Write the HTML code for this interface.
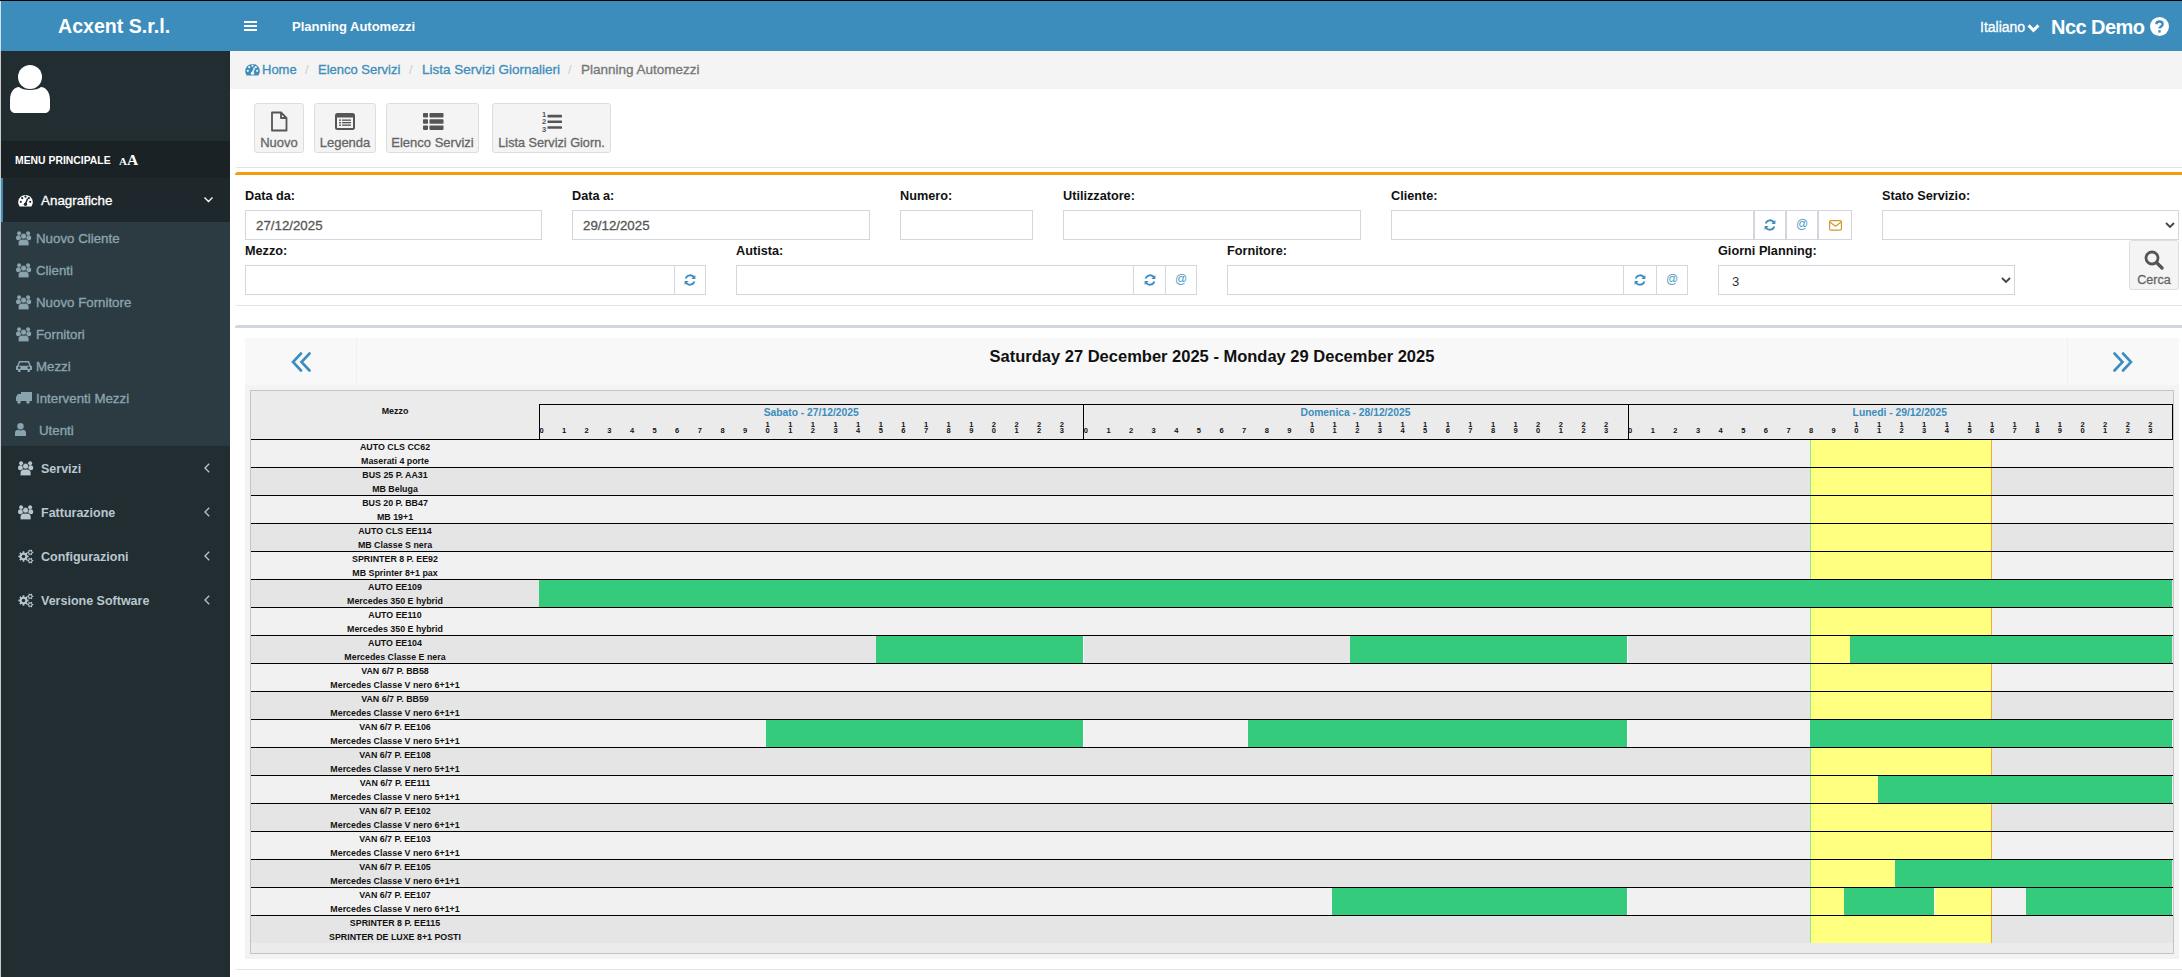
<!DOCTYPE html><html><head><meta charset="utf-8"><title>Planning Automezzi</title><style>
*{box-sizing:border-box;margin:0;padding:0}
html,body{width:2182px;height:977px;overflow:hidden;background:#fff;font-family:"Liberation Sans",sans-serif;}
.a{position:absolute}
.t{position:absolute;white-space:nowrap;line-height:1}
.w{-webkit-text-stroke-width:0.3px}
</style></head><body>
<div class="a" style="left:0;top:0;width:2182px;height:1px;background:#000"></div>
<div class="a" style="left:0;top:1px;width:2182px;height:50px;background:#3c8dbc"></div>
<div class="a" style="left:0;top:1px;width:1px;height:50px;background:#cde0ec"></div>
<div class="t" style="left:58px;top:17px;font-size:19.6px;font-weight:bold;color:#fff">Acxent S.r.l.</div>
<div class="a" style="left:244px;top:21px;width:13px;height:2px;background:#fff;box-shadow:0 4px 0 #fff,0 8px 0 #fff"></div>
<div class="t" style="left:292px;top:20px;font-size:13px;font-weight:bold;color:#fff">Planning Automezzi</div>
<div class="t w" style="left:1980px;top:20px;font-size:14px;color:#fff">Italiano</div>
<svg class="a" style="left:2026px;top:22px" width="15" height="12" viewBox="0 0 15 12"><path d="M2.6 3.4 L7.5 8.3 L12.4 3.4" stroke="#fff" stroke-width="3" fill="none"/></svg>
<div class="t" style="left:2051px;top:16.9px;font-size:20px;letter-spacing:-0.55px;font-weight:bold;color:#fff">Ncc Demo</div>
<svg class="a" style="left:2150px;top:17px" width="19" height="19" viewBox="0 0 19 19"><circle cx="9.5" cy="9.5" r="9.5" fill="#fff"/><path d="M6.3 7.2 C6.3 3.6 12.7 3.6 12.7 7.2 C12.7 9.4 9.5 9.6 9.5 11.6" stroke="#3c8dbc" stroke-width="2.3" fill="none"/><rect x="8.3" y="13.2" width="2.4" height="2.4" fill="#3c8dbc"/></svg>
<div class="a" style="left:1px;top:51px;width:229px;height:926px;background:#222d32"></div>
<div class="a" style="left:0;top:51px;width:1px;height:926px;background:#c9c9c9"></div>
<svg class="a" style="left:9px;top:64px" width="42" height="50" viewBox="0 0 42 50"><circle cx="21" cy="13" r="12" fill="#fff"/><path d="M1 36 C1 27 6 23 10 23 C14 27 28 27 32 23 C36 23 41 27 41 36 L41 43 C41 47 39 49 35 49 L7 49 C3 49 1 47 1 43 Z" fill="#fff"/></svg>
<div class="a" style="left:1px;top:141px;width:229px;height:37px;background:#1a2226"></div>
<div class="t" style="left:15px;top:156px;font-size:10.4px;font-weight:bold;color:#fff">MENU PRINCIPALE</div>
<div class="t" style="left:119px;top:151.8px;font-family:'Liberation Serif';font-weight:bold;color:#fff;font-size:15.5px;line-height:16px"><span style="font-size:11px">A</span>A</div>
<div class="a" style="left:1px;top:178px;width:229px;height:44px;background:#1e282c;border-left:2px solid #3c8dbc"></div>
<div class="t w" style="left:41px;top:194px;font-size:13.4px;color:#fff">Anagrafiche</div>
<svg class="a" style="left:204px;top:197px" width="9" height="6" viewBox="0 0 9 6"><path d="M0.5 0.5 L4.5 4.5 L8.5 0.5" stroke="#fff" stroke-width="1.3" fill="none"/></svg>
<div class="a" style="left:1px;top:222px;width:229px;height:224px;background:#2c3b41"></div>
<svg class="a" style="left:16px;top:231px" width="16" height="15" viewBox="0 0 16 15"><circle cx="3.1" cy="2.2" r="2" fill="#8aa4af"/><circle cx="12.1" cy="2.2" r="2" fill="#8aa4af"/><rect x="0" y="4.2" width="5.2" height="5" rx="2.5" fill="#8aa4af"/><rect x="10" y="4.2" width="5.2" height="5" rx="2.5" fill="#8aa4af"/><circle cx="7.6" cy="5.3" r="3" fill="#8aa4af" stroke="#2c3b41" stroke-width="0.7"/><path d="M2.2 14.8 L2.2 11.8 C2.2 9.5 4 8.2 5.6 8.2 L9.6 8.2 C11.2 8.2 13 9.5 13 11.8 L13 14.8 Z" fill="#8aa4af" stroke="#2c3b41" stroke-width="0.7"/></svg>
<div class="t" style="left:36px;top:232px;font-size:13.3px;color:#8aa4af;-webkit-text-stroke-width:0.35px">Nuovo Cliente</div>
<svg class="a" style="left:16px;top:263px" width="16" height="15" viewBox="0 0 16 15"><circle cx="3.1" cy="2.2" r="2" fill="#8aa4af"/><circle cx="12.1" cy="2.2" r="2" fill="#8aa4af"/><rect x="0" y="4.2" width="5.2" height="5" rx="2.5" fill="#8aa4af"/><rect x="10" y="4.2" width="5.2" height="5" rx="2.5" fill="#8aa4af"/><circle cx="7.6" cy="5.3" r="3" fill="#8aa4af" stroke="#2c3b41" stroke-width="0.7"/><path d="M2.2 14.8 L2.2 11.8 C2.2 9.5 4 8.2 5.6 8.2 L9.6 8.2 C11.2 8.2 13 9.5 13 11.8 L13 14.8 Z" fill="#8aa4af" stroke="#2c3b41" stroke-width="0.7"/></svg>
<div class="t" style="left:36px;top:264px;font-size:13.3px;color:#8aa4af;-webkit-text-stroke-width:0.35px">Clienti</div>
<svg class="a" style="left:16px;top:295px" width="16" height="15" viewBox="0 0 16 15"><circle cx="3.1" cy="2.2" r="2" fill="#8aa4af"/><circle cx="12.1" cy="2.2" r="2" fill="#8aa4af"/><rect x="0" y="4.2" width="5.2" height="5" rx="2.5" fill="#8aa4af"/><rect x="10" y="4.2" width="5.2" height="5" rx="2.5" fill="#8aa4af"/><circle cx="7.6" cy="5.3" r="3" fill="#8aa4af" stroke="#2c3b41" stroke-width="0.7"/><path d="M2.2 14.8 L2.2 11.8 C2.2 9.5 4 8.2 5.6 8.2 L9.6 8.2 C11.2 8.2 13 9.5 13 11.8 L13 14.8 Z" fill="#8aa4af" stroke="#2c3b41" stroke-width="0.7"/></svg>
<div class="t" style="left:36px;top:296px;font-size:13.3px;color:#8aa4af;-webkit-text-stroke-width:0.35px">Nuovo Fornitore</div>
<svg class="a" style="left:16px;top:327px" width="16" height="15" viewBox="0 0 16 15"><circle cx="3.1" cy="2.2" r="2" fill="#8aa4af"/><circle cx="12.1" cy="2.2" r="2" fill="#8aa4af"/><rect x="0" y="4.2" width="5.2" height="5" rx="2.5" fill="#8aa4af"/><rect x="10" y="4.2" width="5.2" height="5" rx="2.5" fill="#8aa4af"/><circle cx="7.6" cy="5.3" r="3" fill="#8aa4af" stroke="#2c3b41" stroke-width="0.7"/><path d="M2.2 14.8 L2.2 11.8 C2.2 9.5 4 8.2 5.6 8.2 L9.6 8.2 C11.2 8.2 13 9.5 13 11.8 L13 14.8 Z" fill="#8aa4af" stroke="#2c3b41" stroke-width="0.7"/></svg>
<div class="t" style="left:36px;top:328px;font-size:13.3px;color:#8aa4af;-webkit-text-stroke-width:0.35px">Fornitori</div>
<svg class="a" style="left:16px;top:360px" width="16" height="12" viewBox="0 0 16 12"><path d="M3 1 L13 1 L15 6 L16 6 L16 10 L14 10 L14 12 L11.5 12 L11.5 10 L4.5 10 L4.5 12 L2 12 L2 10 L0 10 L0 6 L1 6 Z" fill="#8aa4af"/><path d="M4 2.5 L12 2.5 L13.3 5.8 L2.7 5.8 Z" fill="#2c3b41"/><circle cx="3.2" cy="7.8" r="1.2" fill="#2c3b41"/><circle cx="12.8" cy="7.8" r="1.2" fill="#2c3b41"/></svg>
<div class="t" style="left:36px;top:360px;font-size:13.3px;color:#8aa4af;-webkit-text-stroke-width:0.35px">Mezzi</div>
<svg class="a" style="left:16px;top:392px" width="16" height="12" viewBox="0 0 16 12"><rect x="5" y="0" width="11" height="9" fill="#8aa4af"/><path d="M0 5 L2 2 L5 2 L5 9 L0 9 Z" fill="#8aa4af"/><circle cx="3" cy="10" r="1.8" fill="#8aa4af"/><circle cx="12" cy="10" r="1.8" fill="#8aa4af"/></svg>
<div class="t" style="left:36px;top:392px;font-size:13.3px;color:#8aa4af;-webkit-text-stroke-width:0.35px">Interventi Mezzi</div>
<svg class="a" style="left:15px;top:423px" width="11" height="13" viewBox="0 0 11 13"><circle cx="5.5" cy="3.3" r="3.2" fill="#8aa4af"/><path d="M0 13 L0 10 C0 8 1.5 6.8 3 6.8 C4.5 7.8 6.5 7.8 8 6.8 C9.5 6.8 11 8 11 10 L11 13 Z" fill="#8aa4af"/></svg>
<div class="t" style="left:39px;top:424px;font-size:13.3px;color:#8aa4af;-webkit-text-stroke-width:0.35px">Utenti</div>
<svg class="a" style="left:18px;top:194px" width="15" height="13" viewBox="0 0 15 13"><path d="M1.6 12.5 A7.3 7.3 0 1 1 13.4 12.5 Z" fill="#fff"/><circle cx="2.8" cy="7.8" r="1.1" fill="#1e282c"/><circle cx="4.2" cy="4.2" r="1.1" fill="#1e282c"/><circle cx="7.5" cy="2.7" r="1.1" fill="#1e282c"/><circle cx="12.2" cy="7.8" r="1.1" fill="#1e282c"/><circle cx="10.8" cy="4.2" r="1.1" fill="#1e282c"/><path d="M7.5 10 L9.6 4.5" stroke="#1e282c" stroke-width="1.5"/><circle cx="7.5" cy="10.2" r="1.7" fill="#1e282c"/></svg>
<svg class="a" style="left:18px;top:461px" width="16" height="15" viewBox="0 0 16 15"><circle cx="3.1" cy="2.2" r="2" fill="#b8c7ce"/><circle cx="12.1" cy="2.2" r="2" fill="#b8c7ce"/><rect x="0" y="4.2" width="5.2" height="5" rx="2.5" fill="#b8c7ce"/><rect x="10" y="4.2" width="5.2" height="5" rx="2.5" fill="#b8c7ce"/><circle cx="7.6" cy="5.3" r="3" fill="#b8c7ce" stroke="#222d32" stroke-width="0.7"/><path d="M2.2 14.8 L2.2 11.8 C2.2 9.5 4 8.2 5.6 8.2 L9.6 8.2 C11.2 8.2 13 9.5 13 11.8 L13 14.8 Z" fill="#b8c7ce" stroke="#222d32" stroke-width="0.7"/></svg>
<div class="t" style="left:41px;top:463px;font-size:12.5px;font-weight:bold;color:#b8c7ce">Servizi</div>
<svg class="a" style="left:204px;top:463px" width="6" height="10" viewBox="0 0 6 10"><path d="M5.2 0.8 L1 5 L5.2 9.2" stroke="#b8c7ce" stroke-width="1.3" fill="none"/></svg>
<svg class="a" style="left:18px;top:505px" width="16" height="15" viewBox="0 0 16 15"><circle cx="3.1" cy="2.2" r="2" fill="#b8c7ce"/><circle cx="12.1" cy="2.2" r="2" fill="#b8c7ce"/><rect x="0" y="4.2" width="5.2" height="5" rx="2.5" fill="#b8c7ce"/><rect x="10" y="4.2" width="5.2" height="5" rx="2.5" fill="#b8c7ce"/><circle cx="7.6" cy="5.3" r="3" fill="#b8c7ce" stroke="#222d32" stroke-width="0.7"/><path d="M2.2 14.8 L2.2 11.8 C2.2 9.5 4 8.2 5.6 8.2 L9.6 8.2 C11.2 8.2 13 9.5 13 11.8 L13 14.8 Z" fill="#b8c7ce" stroke="#222d32" stroke-width="0.7"/></svg>
<div class="t" style="left:41px;top:507px;font-size:12.5px;font-weight:bold;color:#b8c7ce">Fatturazione</div>
<svg class="a" style="left:204px;top:507px" width="6" height="10" viewBox="0 0 6 10"><path d="M5.2 0.8 L1 5 L5.2 9.2" stroke="#b8c7ce" stroke-width="1.3" fill="none"/></svg>
<svg class="a" style="left:18px;top:549px" width="16" height="15" viewBox="0 0 16 15"><path d="M9.29 6.57 L10.64 6.72 L10.64 8.28 L9.29 8.43 L8.83 9.52 L9.69 10.59 L8.59 11.69 L7.52 10.83 L6.43 11.29 L6.28 12.64 L4.72 12.64 L4.57 11.29 L3.48 10.83 L2.41 11.69 L1.31 10.59 L2.17 9.52 L1.71 8.43 L0.36 8.28 L0.36 6.72 L1.71 6.57 L2.17 5.48 L1.31 4.41 L2.41 3.31 L3.48 4.17 L4.57 3.71 L4.72 2.36 L6.28 2.36 L6.43 3.71 L7.52 4.17 L8.59 3.31 L9.69 4.41 L8.83 5.48 Z" fill="#b8c7ce"/><circle cx="5.5" cy="7.5" r="1.8" fill="#222d32"/><path d="M14.40 2.74 L15.25 2.83 L15.25 3.97 L14.40 4.06 L13.92 4.89 L14.26 5.67 L13.28 6.23 L12.78 5.55 L11.82 5.55 L11.32 6.23 L10.34 5.67 L10.68 4.89 L10.20 4.06 L9.35 3.97 L9.35 2.83 L10.20 2.74 L10.68 1.91 L10.34 1.13 L11.32 0.57 L11.82 1.25 L12.78 1.25 L13.28 0.57 L14.26 1.13 L13.92 1.91 Z" fill="#b8c7ce"/><circle cx="12.3" cy="3.4" r="1.2" fill="#222d32"/><path d="M14.40 10.94 L15.25 11.03 L15.25 12.17 L14.40 12.26 L13.92 13.09 L14.26 13.87 L13.28 14.43 L12.78 13.75 L11.82 13.75 L11.32 14.43 L10.34 13.87 L10.68 13.09 L10.20 12.26 L9.35 12.17 L9.35 11.03 L10.20 10.94 L10.68 10.11 L10.34 9.33 L11.32 8.77 L11.82 9.45 L12.78 9.45 L13.28 8.77 L14.26 9.33 L13.92 10.11 Z" fill="#b8c7ce"/><circle cx="12.3" cy="11.6" r="1.2" fill="#222d32"/></svg>
<div class="t" style="left:41px;top:551px;font-size:12.5px;font-weight:bold;color:#b8c7ce">Configurazioni</div>
<svg class="a" style="left:204px;top:551px" width="6" height="10" viewBox="0 0 6 10"><path d="M5.2 0.8 L1 5 L5.2 9.2" stroke="#b8c7ce" stroke-width="1.3" fill="none"/></svg>
<svg class="a" style="left:18px;top:593px" width="16" height="15" viewBox="0 0 16 15"><path d="M9.29 6.57 L10.64 6.72 L10.64 8.28 L9.29 8.43 L8.83 9.52 L9.69 10.59 L8.59 11.69 L7.52 10.83 L6.43 11.29 L6.28 12.64 L4.72 12.64 L4.57 11.29 L3.48 10.83 L2.41 11.69 L1.31 10.59 L2.17 9.52 L1.71 8.43 L0.36 8.28 L0.36 6.72 L1.71 6.57 L2.17 5.48 L1.31 4.41 L2.41 3.31 L3.48 4.17 L4.57 3.71 L4.72 2.36 L6.28 2.36 L6.43 3.71 L7.52 4.17 L8.59 3.31 L9.69 4.41 L8.83 5.48 Z" fill="#b8c7ce"/><circle cx="5.5" cy="7.5" r="1.8" fill="#222d32"/><path d="M14.40 2.74 L15.25 2.83 L15.25 3.97 L14.40 4.06 L13.92 4.89 L14.26 5.67 L13.28 6.23 L12.78 5.55 L11.82 5.55 L11.32 6.23 L10.34 5.67 L10.68 4.89 L10.20 4.06 L9.35 3.97 L9.35 2.83 L10.20 2.74 L10.68 1.91 L10.34 1.13 L11.32 0.57 L11.82 1.25 L12.78 1.25 L13.28 0.57 L14.26 1.13 L13.92 1.91 Z" fill="#b8c7ce"/><circle cx="12.3" cy="3.4" r="1.2" fill="#222d32"/><path d="M14.40 10.94 L15.25 11.03 L15.25 12.17 L14.40 12.26 L13.92 13.09 L14.26 13.87 L13.28 14.43 L12.78 13.75 L11.82 13.75 L11.32 14.43 L10.34 13.87 L10.68 13.09 L10.20 12.26 L9.35 12.17 L9.35 11.03 L10.20 10.94 L10.68 10.11 L10.34 9.33 L11.32 8.77 L11.82 9.45 L12.78 9.45 L13.28 8.77 L14.26 9.33 L13.92 10.11 Z" fill="#b8c7ce"/><circle cx="12.3" cy="11.6" r="1.2" fill="#222d32"/></svg>
<div class="t" style="left:41px;top:595px;font-size:12.5px;font-weight:bold;color:#b8c7ce">Versione Software</div>
<svg class="a" style="left:204px;top:595px" width="6" height="10" viewBox="0 0 6 10"><path d="M5.2 0.8 L1 5 L5.2 9.2" stroke="#b8c7ce" stroke-width="1.3" fill="none"/></svg>
<div class="a" style="left:230px;top:51px;width:1952px;height:38px;background:#f4f4f4"></div>
<svg class="a" style="left:245px;top:63px" width="15" height="13" viewBox="0 0 15 13"><path d="M1.6 12.5 A7.3 7.3 0 1 1 13.4 12.5 Z" fill="#3c8dbc"/><circle cx="2.8" cy="7.8" r="1.1" fill="#f4f4f4"/><circle cx="4.2" cy="4.2" r="1.1" fill="#f4f4f4"/><circle cx="7.5" cy="2.7" r="1.1" fill="#f4f4f4"/><circle cx="12.2" cy="7.8" r="1.1" fill="#f4f4f4"/><circle cx="10.8" cy="4.2" r="1.1" fill="#f4f4f4"/><path d="M7.5 10 L9.6 4.5" stroke="#f4f4f4" stroke-width="1.5"/><circle cx="7.5" cy="10.2" r="1.7" fill="#f4f4f4"/></svg>
<div class="t w" style="left:262px;top:63px;font-size:13px;color:#3c8dbc">Home</div>
<div class="t" style="left:305px;top:63px;font-size:13px;color:#ccc">/</div>
<div class="t w" style="left:318px;top:63px;font-size:13px;color:#3c8dbc">Elenco Servizi</div>
<div class="t" style="left:409px;top:63px;font-size:13px;color:#ccc">/</div>
<div class="t w" style="left:422px;top:63px;font-size:13.5px;color:#3c8dbc">Lista Servizi Giornalieri</div>
<div class="t" style="left:568px;top:63px;font-size:13px;color:#ccc">/</div>
<div class="t w" style="left:581px;top:63px;font-size:13.5px;color:#777">Planning Automezzi</div>
<div class="a" style="left:235px;top:89px;width:1960px;height:79px;background:#fff;border-bottom:1px solid #e3e3e3;border-radius:0 0 3px 3px"></div>
<div class="a" style="left:254px;top:103px;width:50px;height:50px;background:#f4f4f4;border:1px solid #ddd;border-radius:3px"></div>
<div class="t w" style="left:254px;width:50px;text-align:center;top:136px;font-size:13px;color:#666">Nuovo</div>
<svg class="a" style="left:279.0px;top:111px;margin-left:-9px" width="18" height="21" viewBox="0 0 18 21"><path d="M2 1.5 L11 1.5 L16.5 7 L16.5 19.5 L2 19.5 Z M11 1.5 L11 7 L16.5 7" stroke="#555" stroke-width="1.8" fill="none" stroke-linejoin="round"/></svg>
<div class="a" style="left:314px;top:103px;width:62px;height:50px;background:#f4f4f4;border:1px solid #ddd;border-radius:3px"></div>
<div class="t w" style="left:314px;width:62px;text-align:center;top:136px;font-size:13px;color:#666">Legenda</div>
<svg class="a" style="left:345.0px;top:113px;margin-left:-10px" width="20" height="17" viewBox="0 0 20 17"><rect x="1" y="1" width="18" height="15" rx="1.5" fill="none" stroke="#555" stroke-width="2"/><rect x="1" y="1" width="18" height="3.5" fill="#555"/><rect x="4" y="6.5" width="2" height="1.3" fill="#555"/><rect x="7" y="6.5" width="9" height="1.3" fill="#555"/><rect x="4" y="9" width="2" height="1.3" fill="#555"/><rect x="7" y="9" width="9" height="1.3" fill="#555"/><rect x="4" y="11.5" width="2" height="1.3" fill="#555"/><rect x="7" y="11.5" width="9" height="1.3" fill="#555"/></svg>
<div class="a" style="left:386px;top:103px;width:93px;height:50px;background:#f4f4f4;border:1px solid #ddd;border-radius:3px"></div>
<div class="t w" style="left:386px;width:93px;text-align:center;top:136px;font-size:13px;color:#666">Elenco Servizi</div>
<svg class="a" style="left:432.5px;top:113px;margin-left:-10px" width="21" height="17" viewBox="0 0 21 17"><rect x="0" y="0" width="5" height="4.5" rx="0.8" fill="#555"/><rect x="6.5" y="0" width="14" height="4.5" rx="0.8" fill="#555"/><rect x="0" y="6.2" width="5" height="4.5" rx="0.8" fill="#555"/><rect x="6.5" y="6.2" width="14" height="4.5" rx="0.8" fill="#555"/><rect x="0" y="12.4" width="5" height="4.5" rx="0.8" fill="#555"/><rect x="6.5" y="12.4" width="14" height="4.5" rx="0.8" fill="#555"/></svg>
<div class="a" style="left:492px;top:103px;width:119px;height:50px;background:#f4f4f4;border:1px solid #ddd;border-radius:3px"></div>
<div class="t w" style="left:492px;width:119px;text-align:center;top:137px;font-size:12.7px;color:#666">Lista Servizi Giorn.</div>
<svg class="a" style="left:551.5px;top:110px;margin-left:-10px" width="21" height="22" viewBox="0 0 21 22"><text x="0" y="6.5" font-family="Liberation Sans" font-weight="bold" font-size="7.5" fill="#555">1</text><text x="0" y="14" font-family="Liberation Sans" font-weight="bold" font-size="7.5" fill="#555">2</text><text x="0" y="21.5" font-family="Liberation Sans" font-weight="bold" font-size="7.5" fill="#555">3</text><rect x="5.5" y="4.85" width="14.5" height="2.6" rx="0.6" fill="#555"/><rect x="5.5" y="10.45" width="14.5" height="2.6" rx="0.6" fill="#555"/><rect x="5.5" y="16.15" width="14.5" height="2.6" rx="0.6" fill="#555"/></svg>
<div class="a" style="left:235px;top:172px;width:1960px;height:134px;background:#fff;border-top:3px solid #f39c12;border-bottom:1px solid #e3e3e3;border-radius:3px"></div>
<div class="t" style="left:245px;top:189px;font-size:12.7px;font-weight:bold;color:#111;margin-top:1px">Data da:</div>
<div class="a" style="left:245px;top:210px;width:297px;height:30px;border:1px solid #d2d6de;background:#fff"></div>
<div class="t w" style="left:256px;top:219px;font-size:13.3px;color:#555">27/12/2025</div>
<div class="t" style="left:572px;top:189px;font-size:12.7px;font-weight:bold;color:#111;margin-top:1px">Data a:</div>
<div class="a" style="left:572px;top:210px;width:298px;height:30px;border:1px solid #d2d6de;background:#fff"></div>
<div class="t w" style="left:583px;top:219px;font-size:13.3px;color:#555">29/12/2025</div>
<div class="t" style="left:900px;top:189px;font-size:12.7px;font-weight:bold;color:#111;margin-top:1px">Numero:</div>
<div class="a" style="left:900px;top:210px;width:133px;height:30px;border:1px solid #d2d6de;background:#fff"></div>
<div class="t" style="left:1063px;top:189px;font-size:12.7px;font-weight:bold;color:#111;margin-top:1px">Utilizzatore:</div>
<div class="a" style="left:1063px;top:210px;width:298px;height:30px;border:1px solid #d2d6de;background:#fff"></div>
<div class="t" style="left:1391px;top:189px;font-size:12.7px;font-weight:bold;color:#111;margin-top:1px">Cliente:</div>
<div class="a" style="left:1391px;top:210px;width:363px;height:30px;border:1px solid #d2d6de;background:#fff"></div>
<div class="a" style="left:1754px;top:210px;width:32px;height:30px;border:1px solid #d2d6de;background:#fff"></div>
<svg class="a" style="left:1764.0px;top:219px" width="12" height="12" viewBox="0 0 12 12"><g transform="translate(12,0) scale(-1,1)"><path d="M10.3 4.6 A4.6 4.6 0 0 0 1.9 3.6" stroke="#3c8dbc" stroke-width="1.9" fill="none"/><path d="M0.6 1 L0.6 5 L4.6 5 Z" fill="#3c8dbc"/><path d="M1.7 7.4 A4.6 4.6 0 0 0 10.1 8.4" stroke="#3c8dbc" stroke-width="1.9" fill="none"/><path d="M11.4 11 L11.4 7 L7.4 7 Z" fill="#3c8dbc"/></g></svg>
<div class="a" style="left:1786px;top:210px;width:32px;height:30px;border:1px solid #d2d6de;background:#fff"></div>
<div class="t" style="left:1786px;width:32px;text-align:center;top:218px;font-size:12px;color:#4a9ac8">@</div>
<div class="a" style="left:1818px;top:210px;width:34px;height:30px;border:1px solid #d2d6de;background:#fff"></div>
<svg class="a" style="left:1828.5px;top:220px" width="13" height="11" viewBox="0 0 13 11"><rect x="0.6" y="0.6" width="11.8" height="9.6" rx="1.2" fill="none" stroke="#d09a30" stroke-width="1.2"/><path d="M0.8 2 L6.5 6.2 L12.2 2" stroke="#d09a30" stroke-width="1.2" fill="none"/></svg>
<div class="t" style="left:1882px;top:189px;font-size:12.7px;font-weight:bold;color:#111;margin-top:1px">Stato Servizio:</div>
<div class="a" style="left:1882px;top:210px;width:297px;height:30px;border:1px solid #d2d6de;background:#fff"></div>
<svg class="a" style="left:2165px;top:222px" width="10" height="7" viewBox="0 0 10 7"><path d="M1 1 L5 5 L9 1" stroke="#444" stroke-width="1.8" fill="none"/></svg>
<div class="t" style="left:245px;top:244px;font-size:12.7px;font-weight:bold;color:#111;margin-top:1px">Mezzo:</div>
<div class="a" style="left:245px;top:265px;width:430px;height:30px;border:1px solid #d2d6de;background:#fff"></div>
<div class="a" style="left:674px;top:265px;width:32px;height:30px;border:1px solid #d2d6de;background:#fff"></div>
<svg class="a" style="left:684.0px;top:274px" width="12" height="12" viewBox="0 0 12 12"><g transform="translate(12,0) scale(-1,1)"><path d="M10.3 4.6 A4.6 4.6 0 0 0 1.9 3.6" stroke="#3c8dbc" stroke-width="1.9" fill="none"/><path d="M0.6 1 L0.6 5 L4.6 5 Z" fill="#3c8dbc"/><path d="M1.7 7.4 A4.6 4.6 0 0 0 10.1 8.4" stroke="#3c8dbc" stroke-width="1.9" fill="none"/><path d="M11.4 11 L11.4 7 L7.4 7 Z" fill="#3c8dbc"/></g></svg>
<div class="t" style="left:736px;top:244px;font-size:12.7px;font-weight:bold;color:#111;margin-top:1px">Autista:</div>
<div class="a" style="left:736px;top:265px;width:398px;height:30px;border:1px solid #d2d6de;background:#fff"></div>
<div class="a" style="left:1133px;top:265px;width:33px;height:30px;border:1px solid #d2d6de;background:#fff"></div>
<svg class="a" style="left:1143.5px;top:274px" width="12" height="12" viewBox="0 0 12 12"><g transform="translate(12,0) scale(-1,1)"><path d="M10.3 4.6 A4.6 4.6 0 0 0 1.9 3.6" stroke="#3c8dbc" stroke-width="1.9" fill="none"/><path d="M0.6 1 L0.6 5 L4.6 5 Z" fill="#3c8dbc"/><path d="M1.7 7.4 A4.6 4.6 0 0 0 10.1 8.4" stroke="#3c8dbc" stroke-width="1.9" fill="none"/><path d="M11.4 11 L11.4 7 L7.4 7 Z" fill="#3c8dbc"/></g></svg>
<div class="a" style="left:1165px;top:265px;width:32px;height:30px;border:1px solid #d2d6de;background:#fff"></div>
<div class="t" style="left:1165px;width:32px;text-align:center;top:273px;font-size:12px;color:#4a9ac8">@</div>
<div class="t" style="left:1227px;top:244px;font-size:12.7px;font-weight:bold;color:#111;margin-top:1px">Fornitore:</div>
<div class="a" style="left:1227px;top:265px;width:397px;height:30px;border:1px solid #d2d6de;background:#fff"></div>
<div class="a" style="left:1623px;top:265px;width:34px;height:30px;border:1px solid #d2d6de;background:#fff"></div>
<svg class="a" style="left:1634.0px;top:274px" width="12" height="12" viewBox="0 0 12 12"><g transform="translate(12,0) scale(-1,1)"><path d="M10.3 4.6 A4.6 4.6 0 0 0 1.9 3.6" stroke="#3c8dbc" stroke-width="1.9" fill="none"/><path d="M0.6 1 L0.6 5 L4.6 5 Z" fill="#3c8dbc"/><path d="M1.7 7.4 A4.6 4.6 0 0 0 10.1 8.4" stroke="#3c8dbc" stroke-width="1.9" fill="none"/><path d="M11.4 11 L11.4 7 L7.4 7 Z" fill="#3c8dbc"/></g></svg>
<div class="a" style="left:1656px;top:265px;width:32px;height:30px;border:1px solid #d2d6de;background:#fff"></div>
<div class="t" style="left:1656px;width:32px;text-align:center;top:273px;font-size:12px;color:#4a9ac8">@</div>
<div class="t" style="left:1718px;top:244px;font-size:12.7px;font-weight:bold;color:#111;margin-top:1px">Giorni Planning:</div>
<div class="a" style="left:1718px;top:265px;width:297px;height:30px;border:1px solid #d2d6de;background:#fff"></div>
<svg class="a" style="left:2001px;top:277px" width="10" height="7" viewBox="0 0 10 7"><path d="M1 1 L5 5 L9 1" stroke="#444" stroke-width="1.8" fill="none"/></svg>
<div class="t" style="left:1732px;top:275px;font-size:13px;color:#333">3</div>
<div class="a" style="left:2129px;top:240px;width:50px;height:50px;background:#f4f4f4;border:1px solid #ddd;border-radius:3px"></div>
<svg class="a" style="left:2144px;top:250px" width="20" height="20" viewBox="0 0 20 20"><circle cx="8" cy="8" r="6" stroke="#555" stroke-width="2.8" fill="none"/><path d="M12.5 12.5 L18 18" stroke="#555" stroke-width="3.2" stroke-linecap="round"/></svg>
<div class="t w" style="left:2129px;width:50px;text-align:center;top:274px;font-size:12.5px;color:#666">Cerca</div>
<div class="a" style="left:235px;top:325px;width:1960px;height:645px;background:#fff;border-top:3px solid #d2d6de;border-bottom:1px solid #e3e3e3;border-radius:3px"></div>
<div class="a" style="left:245px;top:338px;width:1934px;height:47px;background:#f8f8f8"></div>
<div class="a" style="left:356px;top:338px;width:1px;height:47px;background:#f0f0f0"></div>
<div class="a" style="left:2067px;top:338px;width:1px;height:47px;background:#f0f0f0"></div>
<svg class="a" style="left:291px;top:352px" width="21" height="21" viewBox="0 0 21 21"><path d="M10 1.5 L2 10 L10 18.5 M18.5 1.5 L10.5 10 L18.5 18.5" stroke="#3c8dbc" stroke-width="2.6" fill="none" stroke-linecap="round"/></svg>
<svg class="a" style="left:2112px;top:352px" width="21" height="21" viewBox="0 0 21 21"><path d="M2.5 1.5 L10.5 10 L2.5 18.5 M11 1.5 L19 10 L11 18.5" stroke="#3c8dbc" stroke-width="2.6" fill="none" stroke-linecap="round"/></svg>
<div class="t" style="left:845px;width:734px;text-align:center;top:348px;font-size:16.5px;font-weight:bold;color:#111">Saturday 27 December 2025 - Monday 29 December 2025</div>
<div class="a" style="left:245px;top:385px;width:1934px;height:174px;background:#f3f3f3"></div>
<div class="a" style="left:245px;top:385px;width:1934px;height:574px;background:#f3f3f3"></div>
<div class="a" style="left:250px;top:390px;width:1924px;height:564px;background:#ebebeb;border:1px solid #c4c4c4"></div>
<div class="t" style="left:251px;width:288px;text-align:center;top:407px;font-size:8.9px;font-weight:bold;color:#111">Mezzo</div>
<div class="a" style="left:251px;top:439px;width:1922px;height:1px;background:#000"></div>
<div class="a" style="left:539px;top:404px;width:1634px;height:36px;border:1px solid #000;border-bottom:none"></div>
<div class="a" style="left:1083px;top:404px;width:1px;height:35px;background:#000"></div>
<div class="a" style="left:1628px;top:404px;width:1px;height:35px;background:#000"></div>
<div class="t" style="left:539.0px;width:544.3px;text-align:center;top:408px;font-size:10.3px;font-weight:bold;color:#3c8dbc">Sabato - 27/12/2025</div>
<div class="t" style="left:539.4px;top:426.9px;font-size:7.5px;font-weight:bold;color:#111">0</div>
<div class="t" style="left:562.0px;top:426.9px;font-size:7.5px;font-weight:bold;color:#111">1</div>
<div class="t" style="left:584.6px;top:426.9px;font-size:7.5px;font-weight:bold;color:#111">2</div>
<div class="t" style="left:607.3px;top:426.9px;font-size:7.5px;font-weight:bold;color:#111">3</div>
<div class="t" style="left:629.9px;top:426.9px;font-size:7.5px;font-weight:bold;color:#111">4</div>
<div class="t" style="left:652.5px;top:426.9px;font-size:7.5px;font-weight:bold;color:#111">5</div>
<div class="t" style="left:675.1px;top:426.9px;font-size:7.5px;font-weight:bold;color:#111">6</div>
<div class="t" style="left:697.7px;top:426.9px;font-size:7.5px;font-weight:bold;color:#111">7</div>
<div class="t" style="left:720.4px;top:426.9px;font-size:7.5px;font-weight:bold;color:#111">8</div>
<div class="t" style="left:743.0px;top:426.9px;font-size:7.5px;font-weight:bold;color:#111">9</div>
<div class="t" style="left:765.6px;top:421.6px;font-size:7.5px;line-height:6px;font-weight:bold;color:#111">1<br>0</div>
<div class="t" style="left:788.2px;top:421.6px;font-size:7.5px;line-height:6px;font-weight:bold;color:#111">1<br>1</div>
<div class="t" style="left:810.8px;top:421.6px;font-size:7.5px;line-height:6px;font-weight:bold;color:#111">1<br>2</div>
<div class="t" style="left:833.5px;top:421.6px;font-size:7.5px;line-height:6px;font-weight:bold;color:#111">1<br>3</div>
<div class="t" style="left:856.1px;top:421.6px;font-size:7.5px;line-height:6px;font-weight:bold;color:#111">1<br>4</div>
<div class="t" style="left:878.7px;top:421.6px;font-size:7.5px;line-height:6px;font-weight:bold;color:#111">1<br>5</div>
<div class="t" style="left:901.3px;top:421.6px;font-size:7.5px;line-height:6px;font-weight:bold;color:#111">1<br>6</div>
<div class="t" style="left:923.9px;top:421.6px;font-size:7.5px;line-height:6px;font-weight:bold;color:#111">1<br>7</div>
<div class="t" style="left:946.6px;top:421.6px;font-size:7.5px;line-height:6px;font-weight:bold;color:#111">1<br>8</div>
<div class="t" style="left:969.2px;top:421.6px;font-size:7.5px;line-height:6px;font-weight:bold;color:#111">1<br>9</div>
<div class="t" style="left:991.8px;top:421.6px;font-size:7.5px;line-height:6px;font-weight:bold;color:#111">2<br>0</div>
<div class="t" style="left:1014.4px;top:421.6px;font-size:7.5px;line-height:6px;font-weight:bold;color:#111">2<br>1</div>
<div class="t" style="left:1037.0px;top:421.6px;font-size:7.5px;line-height:6px;font-weight:bold;color:#111">2<br>2</div>
<div class="t" style="left:1059.7px;top:421.6px;font-size:7.5px;line-height:6px;font-weight:bold;color:#111">2<br>3</div>
<div class="t" style="left:1083.3px;width:544.3px;text-align:center;top:408px;font-size:10.3px;font-weight:bold;color:#3c8dbc">Domenica - 28/12/2025</div>
<div class="t" style="left:1083.7px;top:426.9px;font-size:7.5px;font-weight:bold;color:#111">0</div>
<div class="t" style="left:1106.4px;top:426.9px;font-size:7.5px;font-weight:bold;color:#111">1</div>
<div class="t" style="left:1129.0px;top:426.9px;font-size:7.5px;font-weight:bold;color:#111">2</div>
<div class="t" style="left:1151.6px;top:426.9px;font-size:7.5px;font-weight:bold;color:#111">3</div>
<div class="t" style="left:1174.2px;top:426.9px;font-size:7.5px;font-weight:bold;color:#111">4</div>
<div class="t" style="left:1196.8px;top:426.9px;font-size:7.5px;font-weight:bold;color:#111">5</div>
<div class="t" style="left:1219.5px;top:426.9px;font-size:7.5px;font-weight:bold;color:#111">6</div>
<div class="t" style="left:1242.1px;top:426.9px;font-size:7.5px;font-weight:bold;color:#111">7</div>
<div class="t" style="left:1264.7px;top:426.9px;font-size:7.5px;font-weight:bold;color:#111">8</div>
<div class="t" style="left:1287.3px;top:426.9px;font-size:7.5px;font-weight:bold;color:#111">9</div>
<div class="t" style="left:1309.9px;top:421.6px;font-size:7.5px;line-height:6px;font-weight:bold;color:#111">1<br>0</div>
<div class="t" style="left:1332.6px;top:421.6px;font-size:7.5px;line-height:6px;font-weight:bold;color:#111">1<br>1</div>
<div class="t" style="left:1355.2px;top:421.6px;font-size:7.5px;line-height:6px;font-weight:bold;color:#111">1<br>2</div>
<div class="t" style="left:1377.8px;top:421.6px;font-size:7.5px;line-height:6px;font-weight:bold;color:#111">1<br>3</div>
<div class="t" style="left:1400.4px;top:421.6px;font-size:7.5px;line-height:6px;font-weight:bold;color:#111">1<br>4</div>
<div class="t" style="left:1423.0px;top:421.6px;font-size:7.5px;line-height:6px;font-weight:bold;color:#111">1<br>5</div>
<div class="t" style="left:1445.7px;top:421.6px;font-size:7.5px;line-height:6px;font-weight:bold;color:#111">1<br>6</div>
<div class="t" style="left:1468.3px;top:421.6px;font-size:7.5px;line-height:6px;font-weight:bold;color:#111">1<br>7</div>
<div class="t" style="left:1490.9px;top:421.6px;font-size:7.5px;line-height:6px;font-weight:bold;color:#111">1<br>8</div>
<div class="t" style="left:1513.5px;top:421.6px;font-size:7.5px;line-height:6px;font-weight:bold;color:#111">1<br>9</div>
<div class="t" style="left:1536.1px;top:421.6px;font-size:7.5px;line-height:6px;font-weight:bold;color:#111">2<br>0</div>
<div class="t" style="left:1558.8px;top:421.6px;font-size:7.5px;line-height:6px;font-weight:bold;color:#111">2<br>1</div>
<div class="t" style="left:1581.4px;top:421.6px;font-size:7.5px;line-height:6px;font-weight:bold;color:#111">2<br>2</div>
<div class="t" style="left:1604.0px;top:421.6px;font-size:7.5px;line-height:6px;font-weight:bold;color:#111">2<br>3</div>
<div class="t" style="left:1627.7px;width:544.3px;text-align:center;top:408px;font-size:10.3px;font-weight:bold;color:#3c8dbc">Lunedi - 29/12/2025</div>
<div class="t" style="left:1628.1px;top:426.9px;font-size:7.5px;font-weight:bold;color:#111">0</div>
<div class="t" style="left:1650.7px;top:426.9px;font-size:7.5px;font-weight:bold;color:#111">1</div>
<div class="t" style="left:1673.3px;top:426.9px;font-size:7.5px;font-weight:bold;color:#111">2</div>
<div class="t" style="left:1695.9px;top:426.9px;font-size:7.5px;font-weight:bold;color:#111">3</div>
<div class="t" style="left:1718.5px;top:426.9px;font-size:7.5px;font-weight:bold;color:#111">4</div>
<div class="t" style="left:1741.2px;top:426.9px;font-size:7.5px;font-weight:bold;color:#111">5</div>
<div class="t" style="left:1763.8px;top:426.9px;font-size:7.5px;font-weight:bold;color:#111">6</div>
<div class="t" style="left:1786.4px;top:426.9px;font-size:7.5px;font-weight:bold;color:#111">7</div>
<div class="t" style="left:1809.0px;top:426.9px;font-size:7.5px;font-weight:bold;color:#111">8</div>
<div class="t" style="left:1831.6px;top:426.9px;font-size:7.5px;font-weight:bold;color:#111">9</div>
<div class="t" style="left:1854.3px;top:421.6px;font-size:7.5px;line-height:6px;font-weight:bold;color:#111">1<br>0</div>
<div class="t" style="left:1876.9px;top:421.6px;font-size:7.5px;line-height:6px;font-weight:bold;color:#111">1<br>1</div>
<div class="t" style="left:1899.5px;top:421.6px;font-size:7.5px;line-height:6px;font-weight:bold;color:#111">1<br>2</div>
<div class="t" style="left:1922.1px;top:421.6px;font-size:7.5px;line-height:6px;font-weight:bold;color:#111">1<br>3</div>
<div class="t" style="left:1944.7px;top:421.6px;font-size:7.5px;line-height:6px;font-weight:bold;color:#111">1<br>4</div>
<div class="t" style="left:1967.4px;top:421.6px;font-size:7.5px;line-height:6px;font-weight:bold;color:#111">1<br>5</div>
<div class="t" style="left:1990.0px;top:421.6px;font-size:7.5px;line-height:6px;font-weight:bold;color:#111">1<br>6</div>
<div class="t" style="left:2012.6px;top:421.6px;font-size:7.5px;line-height:6px;font-weight:bold;color:#111">1<br>7</div>
<div class="t" style="left:2035.2px;top:421.6px;font-size:7.5px;line-height:6px;font-weight:bold;color:#111">1<br>8</div>
<div class="t" style="left:2057.8px;top:421.6px;font-size:7.5px;line-height:6px;font-weight:bold;color:#111">1<br>9</div>
<div class="t" style="left:2080.5px;top:421.6px;font-size:7.5px;line-height:6px;font-weight:bold;color:#111">2<br>0</div>
<div class="t" style="left:2103.1px;top:421.6px;font-size:7.5px;line-height:6px;font-weight:bold;color:#111">2<br>1</div>
<div class="t" style="left:2125.7px;top:421.6px;font-size:7.5px;line-height:6px;font-weight:bold;color:#111">2<br>2</div>
<div class="t" style="left:2148.3px;top:421.6px;font-size:7.5px;line-height:6px;font-weight:bold;color:#111">2<br>3</div>
<div class="a" style="left:251px;top:440px;width:1922px;height:27px;background:#f1f1f1"></div>
<div class="t" style="left:251px;width:288px;text-align:center;top:440px;font-size:8.85px;line-height:14px;font-weight:bold;color:#111">AUTO CLS CC62<br>Maserati 4 porte</div>
<div class="a" style="left:1810px;top:440px;width:182px;height:27px;background:#ffff80;border-left:1px solid #8fe88f;border-right:1px solid #ffa640"></div>
<div class="a" style="left:251px;top:467px;width:1922px;height:1px;background:#000"></div>
<div class="a" style="left:251px;top:468px;width:1922px;height:27px;background:#e5e5e5"></div>
<div class="t" style="left:251px;width:288px;text-align:center;top:468px;font-size:8.85px;line-height:14px;font-weight:bold;color:#111">BUS 25 P. AA31<br>MB Beluga</div>
<div class="a" style="left:1810px;top:468px;width:182px;height:27px;background:#ffff80;border-left:1px solid #8fe88f;border-right:1px solid #ffa640"></div>
<div class="a" style="left:251px;top:495px;width:1922px;height:1px;background:#000"></div>
<div class="a" style="left:251px;top:496px;width:1922px;height:27px;background:#f1f1f1"></div>
<div class="t" style="left:251px;width:288px;text-align:center;top:496px;font-size:8.85px;line-height:14px;font-weight:bold;color:#111">BUS 20 P. BB47<br>MB 19+1</div>
<div class="a" style="left:1810px;top:496px;width:182px;height:27px;background:#ffff80;border-left:1px solid #8fe88f;border-right:1px solid #ffa640"></div>
<div class="a" style="left:251px;top:523px;width:1922px;height:1px;background:#000"></div>
<div class="a" style="left:251px;top:524px;width:1922px;height:27px;background:#e5e5e5"></div>
<div class="t" style="left:251px;width:288px;text-align:center;top:524px;font-size:8.85px;line-height:14px;font-weight:bold;color:#111">AUTO CLS EE114<br>MB Classe S nera</div>
<div class="a" style="left:1810px;top:524px;width:182px;height:27px;background:#ffff80;border-left:1px solid #8fe88f;border-right:1px solid #ffa640"></div>
<div class="a" style="left:251px;top:551px;width:1922px;height:1px;background:#000"></div>
<div class="a" style="left:251px;top:552px;width:1922px;height:27px;background:#f1f1f1"></div>
<div class="t" style="left:251px;width:288px;text-align:center;top:552px;font-size:8.85px;line-height:14px;font-weight:bold;color:#111">SPRINTER 8 P. EE92<br>MB Sprinter 8+1 pax</div>
<div class="a" style="left:1810px;top:552px;width:182px;height:27px;background:#ffff80;border-left:1px solid #8fe88f;border-right:1px solid #ffa640"></div>
<div class="a" style="left:251px;top:579px;width:1922px;height:1px;background:#000"></div>
<div class="a" style="left:251px;top:580px;width:1922px;height:27px;background:#e5e5e5"></div>
<div class="t" style="left:251px;width:288px;text-align:center;top:580px;font-size:8.85px;line-height:14px;font-weight:bold;color:#111">AUTO EE109<br>Mercedes 350 E hybrid</div>
<div class="a" style="left:1810px;top:580px;width:182px;height:27px;background:#ffff80;border-left:1px solid #8fe88f;border-right:1px solid #ffa640"></div>
<div class="a" style="left:539px;top:580px;width:1633px;height:27px;background:#35cb7d"></div>
<div class="a" style="left:251px;top:607px;width:1922px;height:1px;background:#000"></div>
<div class="a" style="left:251px;top:608px;width:1922px;height:27px;background:#f1f1f1"></div>
<div class="t" style="left:251px;width:288px;text-align:center;top:608px;font-size:8.85px;line-height:14px;font-weight:bold;color:#111">AUTO EE110<br>Mercedes 350 E hybrid</div>
<div class="a" style="left:1810px;top:608px;width:182px;height:27px;background:#ffff80;border-left:1px solid #8fe88f;border-right:1px solid #ffa640"></div>
<div class="a" style="left:251px;top:635px;width:1922px;height:1px;background:#000"></div>
<div class="a" style="left:251px;top:636px;width:1922px;height:27px;background:#e5e5e5"></div>
<div class="t" style="left:251px;width:288px;text-align:center;top:636px;font-size:8.85px;line-height:14px;font-weight:bold;color:#111">AUTO EE104<br>Mercedes Classe E nera</div>
<div class="a" style="left:1810px;top:636px;width:182px;height:27px;background:#ffff80;border-left:1px solid #8fe88f;border-right:1px solid #ffa640"></div>
<div class="a" style="left:876px;top:636px;width:207px;height:27px;background:#35cb7d"></div>
<div class="a" style="left:1083px;top:636px;width:1px;height:27px;background:#fff"></div>
<div class="a" style="left:1350px;top:636px;width:277px;height:27px;background:#35cb7d"></div>
<div class="a" style="left:1627px;top:636px;width:1px;height:27px;background:#fff"></div>
<div class="a" style="left:1850px;top:636px;width:322px;height:27px;background:#35cb7d"></div>
<div class="a" style="left:251px;top:663px;width:1922px;height:1px;background:#000"></div>
<div class="a" style="left:251px;top:664px;width:1922px;height:27px;background:#f1f1f1"></div>
<div class="t" style="left:251px;width:288px;text-align:center;top:664px;font-size:8.85px;line-height:14px;font-weight:bold;color:#111">VAN 6/7 P. BB58<br>Mercedes Classe V nero 6+1+1</div>
<div class="a" style="left:1810px;top:664px;width:182px;height:27px;background:#ffff80;border-left:1px solid #8fe88f;border-right:1px solid #ffa640"></div>
<div class="a" style="left:251px;top:691px;width:1922px;height:1px;background:#000"></div>
<div class="a" style="left:251px;top:692px;width:1922px;height:27px;background:#e5e5e5"></div>
<div class="t" style="left:251px;width:288px;text-align:center;top:692px;font-size:8.85px;line-height:14px;font-weight:bold;color:#111">VAN 6/7 P. BB59<br>Mercedes Classe V nero 6+1+1</div>
<div class="a" style="left:1810px;top:692px;width:182px;height:27px;background:#ffff80;border-left:1px solid #8fe88f;border-right:1px solid #ffa640"></div>
<div class="a" style="left:251px;top:719px;width:1922px;height:1px;background:#000"></div>
<div class="a" style="left:251px;top:720px;width:1922px;height:27px;background:#f1f1f1"></div>
<div class="t" style="left:251px;width:288px;text-align:center;top:720px;font-size:8.85px;line-height:14px;font-weight:bold;color:#111">VAN 6/7 P. EE106<br>Mercedes Classe V nero 5+1+1</div>
<div class="a" style="left:1810px;top:720px;width:182px;height:27px;background:#ffff80;border-left:1px solid #8fe88f;border-right:1px solid #ffa640"></div>
<div class="a" style="left:766px;top:720px;width:317px;height:27px;background:#35cb7d"></div>
<div class="a" style="left:1083px;top:720px;width:1px;height:27px;background:#fff"></div>
<div class="a" style="left:1248px;top:720px;width:379px;height:27px;background:#35cb7d"></div>
<div class="a" style="left:1627px;top:720px;width:1px;height:27px;background:#fff"></div>
<div class="a" style="left:1810px;top:720px;width:362px;height:27px;background:#35cb7d"></div>
<div class="a" style="left:251px;top:747px;width:1922px;height:1px;background:#000"></div>
<div class="a" style="left:251px;top:748px;width:1922px;height:27px;background:#e5e5e5"></div>
<div class="t" style="left:251px;width:288px;text-align:center;top:748px;font-size:8.85px;line-height:14px;font-weight:bold;color:#111">VAN 6/7 P. EE108<br>Mercedes Classe V nero 5+1+1</div>
<div class="a" style="left:1810px;top:748px;width:182px;height:27px;background:#ffff80;border-left:1px solid #8fe88f;border-right:1px solid #ffa640"></div>
<div class="a" style="left:251px;top:775px;width:1922px;height:1px;background:#000"></div>
<div class="a" style="left:251px;top:776px;width:1922px;height:27px;background:#f1f1f1"></div>
<div class="t" style="left:251px;width:288px;text-align:center;top:776px;font-size:8.85px;line-height:14px;font-weight:bold;color:#111">VAN 6/7 P. EE111<br>Mercedes Classe V nero 5+1+1</div>
<div class="a" style="left:1810px;top:776px;width:182px;height:27px;background:#ffff80;border-left:1px solid #8fe88f;border-right:1px solid #ffa640"></div>
<div class="a" style="left:1878px;top:776px;width:294px;height:27px;background:#35cb7d"></div>
<div class="a" style="left:251px;top:803px;width:1922px;height:1px;background:#000"></div>
<div class="a" style="left:251px;top:804px;width:1922px;height:27px;background:#e5e5e5"></div>
<div class="t" style="left:251px;width:288px;text-align:center;top:804px;font-size:8.85px;line-height:14px;font-weight:bold;color:#111">VAN 6/7 P. EE102<br>Mercedes Classe V nero 6+1+1</div>
<div class="a" style="left:1810px;top:804px;width:182px;height:27px;background:#ffff80;border-left:1px solid #8fe88f;border-right:1px solid #ffa640"></div>
<div class="a" style="left:251px;top:831px;width:1922px;height:1px;background:#000"></div>
<div class="a" style="left:251px;top:832px;width:1922px;height:27px;background:#f1f1f1"></div>
<div class="t" style="left:251px;width:288px;text-align:center;top:832px;font-size:8.85px;line-height:14px;font-weight:bold;color:#111">VAN 6/7 P. EE103<br>Mercedes Classe V nero 6+1+1</div>
<div class="a" style="left:1810px;top:832px;width:182px;height:27px;background:#ffff80;border-left:1px solid #8fe88f;border-right:1px solid #ffa640"></div>
<div class="a" style="left:251px;top:859px;width:1922px;height:1px;background:#000"></div>
<div class="a" style="left:251px;top:860px;width:1922px;height:27px;background:#e5e5e5"></div>
<div class="t" style="left:251px;width:288px;text-align:center;top:860px;font-size:8.85px;line-height:14px;font-weight:bold;color:#111">VAN 6/7 P. EE105<br>Mercedes Classe V nero 6+1+1</div>
<div class="a" style="left:1810px;top:860px;width:182px;height:27px;background:#ffff80;border-left:1px solid #8fe88f;border-right:1px solid #ffa640"></div>
<div class="a" style="left:1895px;top:860px;width:277px;height:27px;background:#35cb7d"></div>
<div class="a" style="left:251px;top:887px;width:1922px;height:1px;background:#000"></div>
<div class="a" style="left:251px;top:888px;width:1922px;height:27px;background:#f1f1f1"></div>
<div class="t" style="left:251px;width:288px;text-align:center;top:888px;font-size:8.85px;line-height:14px;font-weight:bold;color:#111">VAN 6/7 P. EE107<br>Mercedes Classe V nero 6+1+1</div>
<div class="a" style="left:1810px;top:888px;width:182px;height:27px;background:#ffff80;border-left:1px solid #8fe88f;border-right:1px solid #ffa640"></div>
<div class="a" style="left:1332px;top:888px;width:295px;height:27px;background:#35cb7d"></div>
<div class="a" style="left:1627px;top:888px;width:1px;height:27px;background:#fff"></div>
<div class="a" style="left:1844px;top:888px;width:90px;height:27px;background:#35cb7d"></div>
<div class="a" style="left:1934px;top:888px;width:1px;height:27px;background:#fff"></div>
<div class="a" style="left:2026px;top:888px;width:146px;height:27px;background:#35cb7d"></div>
<div class="a" style="left:251px;top:915px;width:1922px;height:1px;background:#000"></div>
<div class="a" style="left:251px;top:916px;width:1922px;height:27px;background:#e5e5e5"></div>
<div class="t" style="left:251px;width:288px;text-align:center;top:916px;font-size:8.85px;line-height:14px;font-weight:bold;color:#111">SPRINTER 8 P. EE115<br>SPRINTER DE LUXE 8+1 POSTI</div>
<div class="a" style="left:1810px;top:916px;width:182px;height:27px;background:#ffff80;border-left:1px solid #8fe88f;border-right:1px solid #ffa640"></div>
<div class="a" style="left:1935px;top:888px;width:57px;height:27px;background:#ffff80;border-right:1px solid #ffa640"></div>
<div class="a" style="left:1992px;top:888px;width:34px;height:27px;background:#f1f1f1"></div>
</body></html>
